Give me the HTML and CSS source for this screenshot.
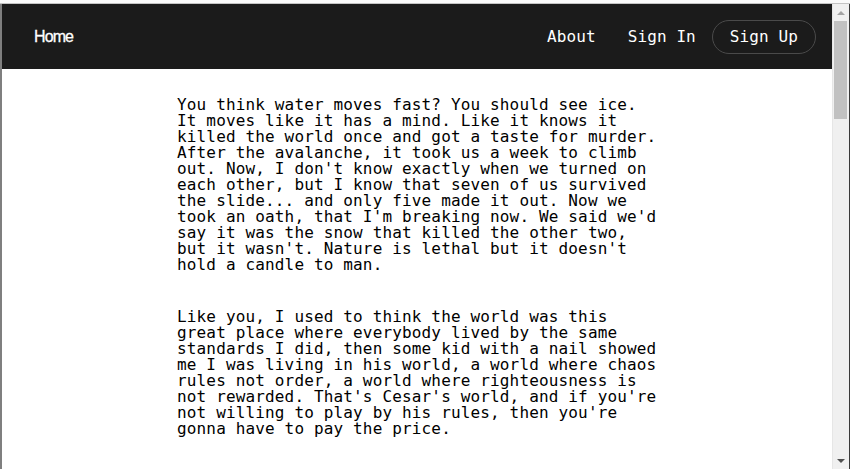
FILE: index.html
```html
<!DOCTYPE html>
<html lang="en">
<head>
<meta charset="utf-8">
<title>Stories</title>
<link rel="stylesheet" href="styles.css">
</head>
<body>
<div class="window">
  <div class="titlebar"></div>
  <div class="frame">
    <div class="viewport">
      <nav class="nav">
        <a class="link home" href="#">Home</a>
        <div class="nav-right">
          <a class="link mono" href="#">About</a>
          <a class="link mono" href="#">Sign In</a>
          <a class="signup mono" href="#">Sign Up</a>
        </div>
      </nav>
      <main class="content">
        <p>You think water moves fast? You should see ice. It moves like it has a mind. Like it knows it killed the world once and got a taste for murder. After the avalanche, it took us a week to climb out. Now, I don't know exactly when we turned on each other, but I know that seven of us survived the slide... and only five made it out. Now we took an oath, that I'm breaking now. We said we'd say it was the snow that killed the other two, but it wasn't. Nature is lethal but it doesn't hold a candle to man.</p>
        <p>Like you, I used to think the world was this great place where everybody lived by the same standards I did, then some kid with a nail showed me I was living in his world, a world where chaos rules not order, a world where righteousness is not rewarded. That's Cesar's world, and if you're not willing to play by his rules, then you're gonna have to pay the price.</p>
      </main>
    </div>
    <div class="scrollbar">
      <div class="sb-btn"><span class="tri-up"></span></div>
      <div class="thumb"></div>
      <div class="sb-track"></div>
      <div class="sb-btn"><span class="tri-down"></span></div>
    </div>
  </div>
</div>
</body>
</html>
```
FILE: styles.css
```css
html, body {
  margin: 0;
  padding: 0;
  height: 100%;
  overflow: hidden;
  background: #ffffff;
}

.window {
  height: 469px;
  display: flex;
  flex-direction: column;
}

.titlebar {
  height: 3px;
  background: #fafafa;
  border-bottom: 1px solid #c4c4c4;
}

.frame {
  flex: 1;
  min-height: 0;
  display: flex;
  border-left: 2px solid #7f7f7f;
  border-right: 1px solid #3a3a3a;
}

.viewport {
  flex: 1;
  min-width: 0;
  overflow: hidden;
  background: #ffffff;
}

.nav {
  height: 65px;
  background: #1b1b1b;
  display: flex;
  align-items: center;
  justify-content: space-between;
  padding: 0 16px;
}

.nav-right {
  display: flex;
  align-items: center;
  padding-left: 1px;
}

.link {
  padding: 0 16px;
  color: #ffffff;
  text-decoration: none;
}

.home {
  font-family: "Liberation Sans", Arial, sans-serif;
  font-size: 16px;
  letter-spacing: -0.9px;
  font-weight: 400;
  -webkit-text-stroke: 0.3px #ffffff;
}

.mono {
  font-family: "DejaVu Sans Mono", monospace;
  font-size: 16px;
  letter-spacing: 0.1px;
}

.signup {
  box-sizing: border-box;
  height: 34px;
  display: flex;
  align-items: center;
  padding: 0 17px;
  border: 1px solid #4a4a4a;
  border-radius: 999px;
  color: #ffffff;
  text-decoration: none;
}

.content {
  width: 480px;
  margin: 0 auto;
  padding-top: 28px;
  font-family: "DejaVu Sans Mono", monospace;
  font-size: 16px;
  line-height: 16px;
  letter-spacing: 0.15px;
  color: #000000;
}

.content p {
  margin: 0;
}

.content p + p {
  margin-top: 36px;
}

.scrollbar {
  width: 17px;
  background: #f0f0f0;
  border-left: 1px solid #e6e6e6;
  box-sizing: border-box;
  display: flex;
  flex-direction: column;
}

.sb-btn {
  height: 17px;
  display: flex;
  align-items: center;
  justify-content: center;
}

.tri-up {
  width: 0;
  height: 0;
  border-left: 4px solid transparent;
  border-right: 4px solid transparent;
  border-bottom: 4px solid #a3a3a3;
}

.tri-down {
  width: 0;
  height: 0;
  border-left: 4px solid transparent;
  border-right: 4px solid transparent;
  border-top: 4px solid #505050;
}

.thumb {
  height: 98px;
  margin: 0 2px 0 1px;
  background: #c1c1c1;
}

.sb-track {
  flex: 1;
}
```
